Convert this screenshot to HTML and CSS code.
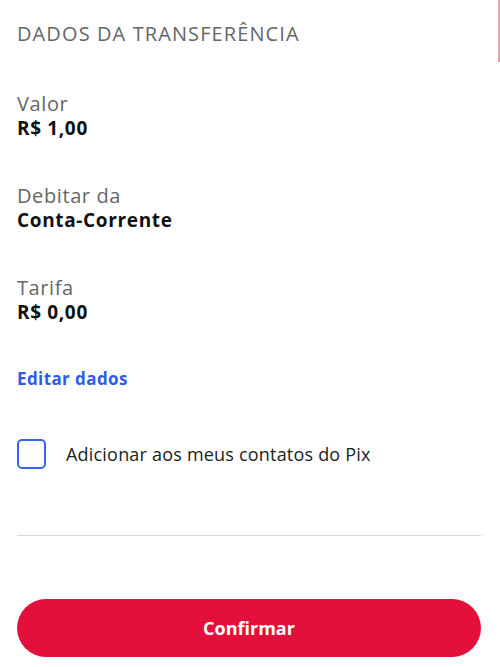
FILE: index.html
```html
<!DOCTYPE html>
<html lang="pt-BR">
<head>
<meta charset="utf-8">
<title>Dados da transferência</title>
<link rel="stylesheet" href="styles.css">
</head>
<body>
<main class="page">
  <h1 class="title">DADOS DA TRANSFERÊNCIA</h1>
  <section class="details">
    <div class="item">
      <div class="label">Valor</div>
      <div class="value">R$ 1,00</div>
    </div>
    <div class="item">
      <div class="label">Debitar da</div>
      <div class="value">Conta-Corrente</div>
    </div>
    <div class="item">
      <div class="label">Tarifa</div>
      <div class="value">R$ 0,00</div>
    </div>
  </section>
  <a class="edit" href="#">Editar dados</a>
  <label class="check-row">
    <span class="checkbox"></span>
    <span class="check-label">Adicionar aos meus contatos do Pix</span>
  </label>
  <hr class="divider">
  <button class="confirm" type="button">Confirmar</button>
</main>
<div class="scrollbar"></div>
</body>
</html>
```
FILE: styles.css
```css
html, body {
  margin: 0;
  padding: 0;
  background: #ffffff;
}
body {
  font-family: "Open Sans", "DejaVu Sans", sans-serif;
  position: relative;
  overflow: hidden;
}
.page {
  display: flex;
  flex-direction: column;
  padding: 22px 19px 0 17px;
}
.title {
  margin: 0;
  font-size: 20px;
  line-height: 24px;
  font-weight: 400;
  color: #666666;
  letter-spacing: 1.1px;
}
.details {
  display: flex;
  flex-direction: column;
  gap: 44px;
  margin-top: 46px;
}
.item {
  display: flex;
  flex-direction: column;
}
.label {
  font-size: 20px;
  line-height: 24px;
  color: #666666;
  letter-spacing: 0.6px;
}
.value {
  font-size: 19px;
  line-height: 24px;
  font-weight: 700;
  color: #111111;
  letter-spacing: 0.65px;
}
.edit {
  margin-top: 43px;
  font-size: 17px;
  line-height: 24px;
  font-weight: 700;
  color: #2e5bea;
  text-decoration: none;
  align-self: flex-start;
  letter-spacing: 0.4px;
}
.check-row {
  margin-top: 48px;
  display: flex;
  align-items: center;
  gap: 20px;
  height: 30px;
}
.checkbox {
  box-sizing: border-box;
  width: 29px;
  height: 30px;
  border: 2.5px solid #3464f0;
  border-radius: 5px;
  flex: none;
}
.check-label {
  font-size: 18px;
  color: #222222;
  letter-spacing: 0.2px;
}
.divider {
  margin: 66px 0 0 0;
  border: 0;
  height: 1px;
  background: #d9d9d9;
}
.confirm {
  margin-top: 63px;
  height: 58px;
  border: 0;
  border-radius: 29px;
  background: #e3103b;
  color: #ffffff;
  font-family: inherit;
  font-size: 18px;
  font-weight: 700;
}
.scrollbar {
  position: absolute;
  top: 0;
  right: 0;
  width: 2px;
  height: 62px;
  background: #e8a0ad;
}
```
